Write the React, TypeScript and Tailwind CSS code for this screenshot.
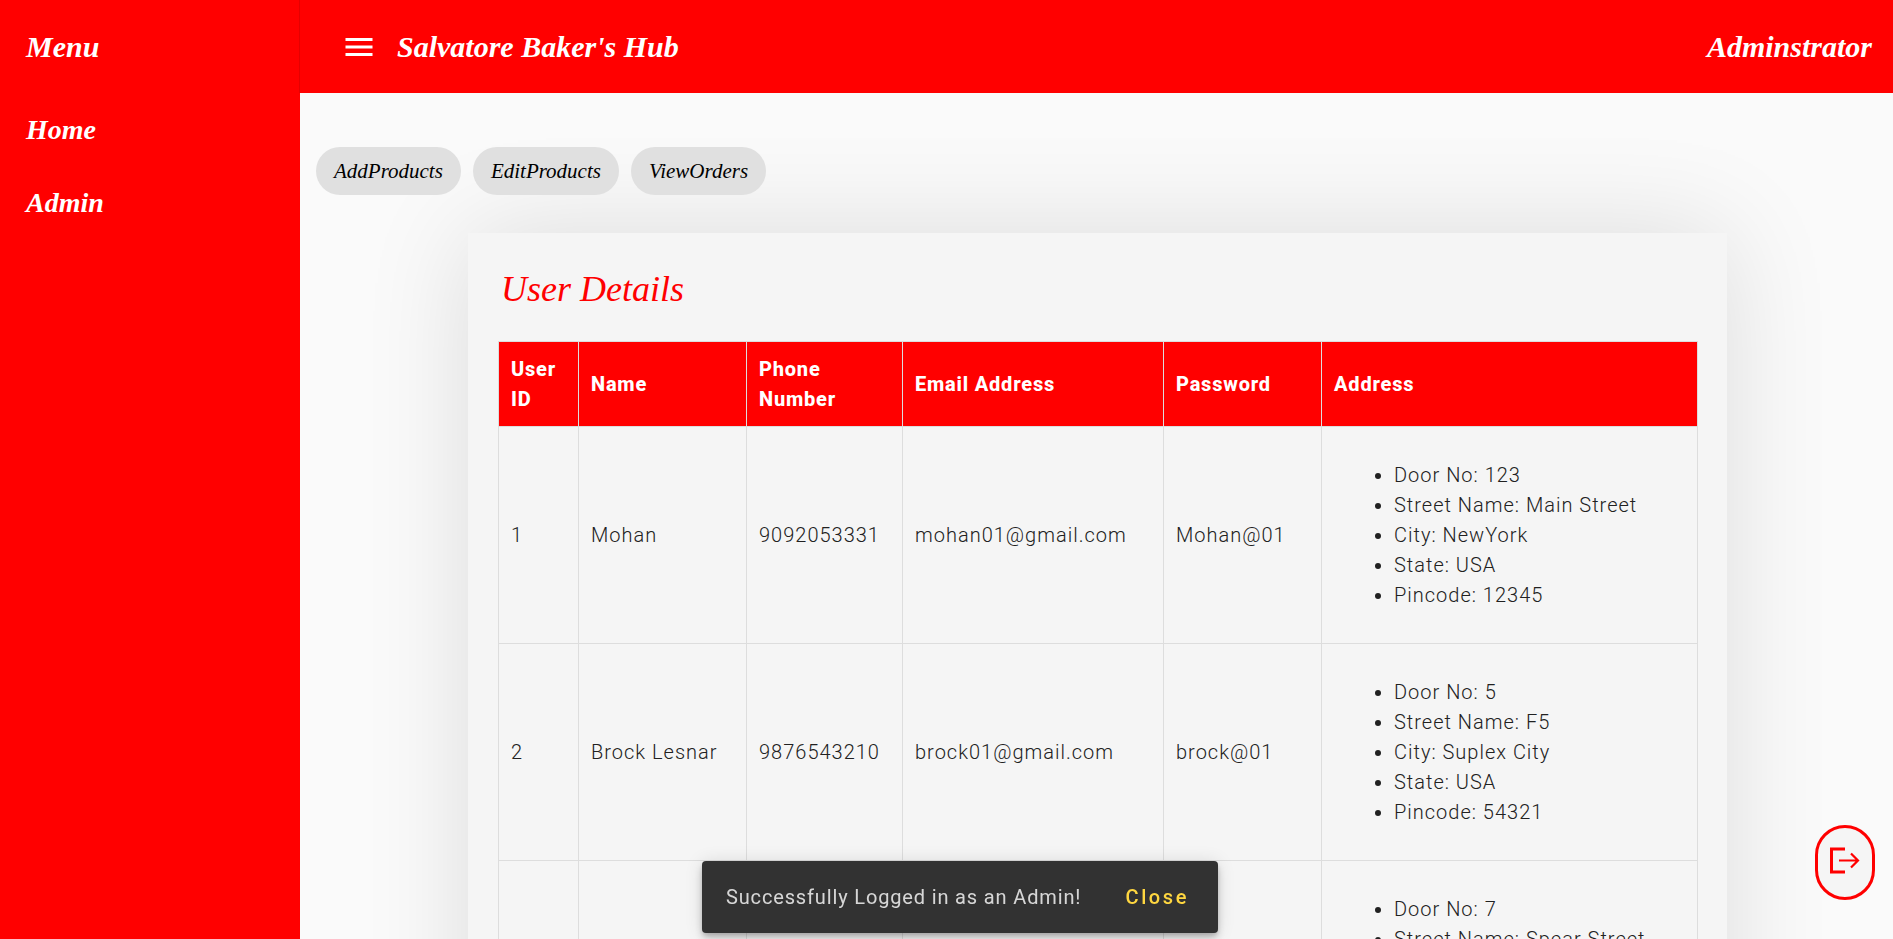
// ── Table data ────────────────────────────────────────────────
const USERS = [
  {
    id: "1",
    name: "Mohan",
    phone: "9092053331",
    email: "mohan01@gmail.com",
    password: "Mohan@01",
    address: ["Door No: 123", "Street Name: Main Street", "City: NewYork", "State: USA", "Pincode: 12345"],
  },
  {
    id: "2",
    name: "Brock Lesnar",
    phone: "9876543210",
    email: "brock01@gmail.com",
    password: "brock@01",
    address: ["Door No: 5", "Street Name: F5", "City: Suplex City", "State: USA", "Pincode: 54321"],
  },
];

const HEADERS = [
  { label: "User ID", width: "w-[80px]" },
  { label: "Name", width: "w-[168px]" },
  { label: "Phone Number", width: "w-[156px]" },
  { label: "Email Address", width: "w-[261px]" },
  { label: "Password", width: "w-[158px]" },
  { label: "Address", width: "w-[376px]" },
];

const TABS = ["AddProducts", "EditProducts", "ViewOrders"];

const CELL = "border border-[#dddddd] px-3 py-4 align-middle";

function AddressList({ items }: { items: string[] }) {
  return (
    <ul className="my-[17px] list-disc pl-[60px]">
      {items.map((line) => (
        <li key={line}>{line}</li>
      ))}
    </ul>
  );
}

export default function App() {
  return (
    <div className="flex h-screen overflow-hidden bg-[#fafafa] font-['Roboto',sans-serif] text-[20px] leading-[30px] font-[350] tracking-[1px] text-[#212121]">
      {/* Sidebar */}
      <aside className="flex w-[300px] shrink-0 flex-col bg-[#ff0000] font-['Liberation_Serif',serif] text-white italic">
        <div className="flex h-[93px] items-center border-r border-black/10 pl-[26px] text-[30px] font-bold tracking-normal">
          Menu
        </div>
        <nav className="flex flex-col gap-[33px] pt-[17px] pl-[26px] text-[28px] leading-[40px] font-bold tracking-normal">
          <a>Home</a>
          <a>Admin</a>
        </nav>
      </aside>

      <div className="flex min-w-0 flex-1 flex-col">
        {/* Top bar */}
        <header className="flex h-[93px] shrink-0 items-center justify-between bg-[#ff0000] pr-[21px] pl-[41px] font-['Liberation_Serif',serif] text-[30px] font-bold tracking-normal text-white italic">
          <div className="flex items-center gap-[20px]">
            <svg width="36" height="36" viewBox="0 0 24 24" fill="currentColor">
              <path d="M3 18h18v-2H3v2zm0-5h18v-2H3v2zm0-7v2h18V6H3z" />
            </svg>
            <span>Salvatore Baker's Hub</span>
          </div>
          <span>Adminstrator</span>
        </header>

        <main className="min-h-0 flex-1 overflow-hidden">
          {/* Tabs */}
          <div className="flex gap-3 pt-[54px] pl-4">
            {TABS.map((tab) => (
              <button
                key={tab}
                className="h-[48px] rounded-[24px] bg-[#e0e0e0] px-[18px] font-['Liberation_Serif',serif] text-[21px] font-normal tracking-normal text-black italic"
              >
                {tab}
              </button>
            ))}
          </div>

          {/* Card */}
          <section className="mt-[38px] ml-[168px] w-[1259px] bg-[#f5f5f5] px-[30px] pt-[30px] shadow-[0_0_100px_rgba(0,0,0,0.12)]">
            <h1 className="h-[78px] pl-[3px] font-['Liberation_Serif',serif] text-[36px] leading-[52px] font-normal tracking-normal text-[#ff0000] italic">
              User Details
            </h1>
            <table className="w-[1199px] table-fixed border-collapse">
              <thead>
                <tr className="h-[85px] bg-[#ff0000] text-white">
                  {HEADERS.map((h) => (
                    <th
                      key={h.label}
                      className={`${h.width} border border-[#dddddd] px-3 text-left align-middle font-extrabold tracking-[0.8px]`}
                    >
                      {h.label}
                    </th>
                  ))}
                </tr>
              </thead>
              <tbody>
                {USERS.map((u) => (
                  <tr key={u.id} className="h-[217px]">
                    <td className={CELL}>{u.id}</td>
                    <td className={CELL}>{u.name}</td>
                    <td className={CELL}>{u.phone}</td>
                    <td className={CELL}>{u.email}</td>
                    <td className={CELL}>{u.password}</td>
                    <td className={CELL}>
                      <AddressList items={u.address} />
                    </td>
                  </tr>
                ))}
                <tr className="h-[217px]">
                  <td className={CELL} />
                  <td className={CELL} />
                  <td className={CELL} />
                  <td className={CELL} />
                  <td className={CELL} />
                  <td className="border border-[#dddddd] px-3 py-4 align-top">
                    <AddressList items={["Door No: 7", "Street Name: Spear Street"]} />
                  </td>
                </tr>
              </tbody>
            </table>
          </section>
        </main>
      </div>

      {/* Logout button */}
      <button className="fixed top-[825px] left-[1815px] flex h-[75px] w-[60px] items-center justify-center rounded-[30px] border-[3px] border-[#ff0000] bg-[#f5f5f5] text-[#ff0000]">
        <svg width="30" height="30" viewBox="0 0 30 30" fill="none" stroke="currentColor" strokeWidth="3" className="overflow-visible">
          <path d="M15 1H1.5v23H15" />
          <path d="M9 12.5h19.5M21 5.5l7 7-7 7" strokeWidth="2.2" />
        </svg>
      </button>

      {/* Snackbar */}
      <div className="fixed bottom-[6px] left-[702px] flex h-[72px] w-[516px] items-center justify-between rounded bg-[#323232] pr-[29px] pl-[24px] text-[20px] font-normal tracking-[0.85px] text-white/80 shadow-[0_3px_5px_-1px_rgba(0,0,0,0.2),0_6px_10px_0_rgba(0,0,0,0.14),0_1px_18px_0_rgba(0,0,0,0.12)]">
        <span>Successfully Logged in as an Admin!</span>
        <span className="font-medium tracking-[2.6px] text-[#ffd740]">Close</span>
      </div>
    </div>
  );
}
